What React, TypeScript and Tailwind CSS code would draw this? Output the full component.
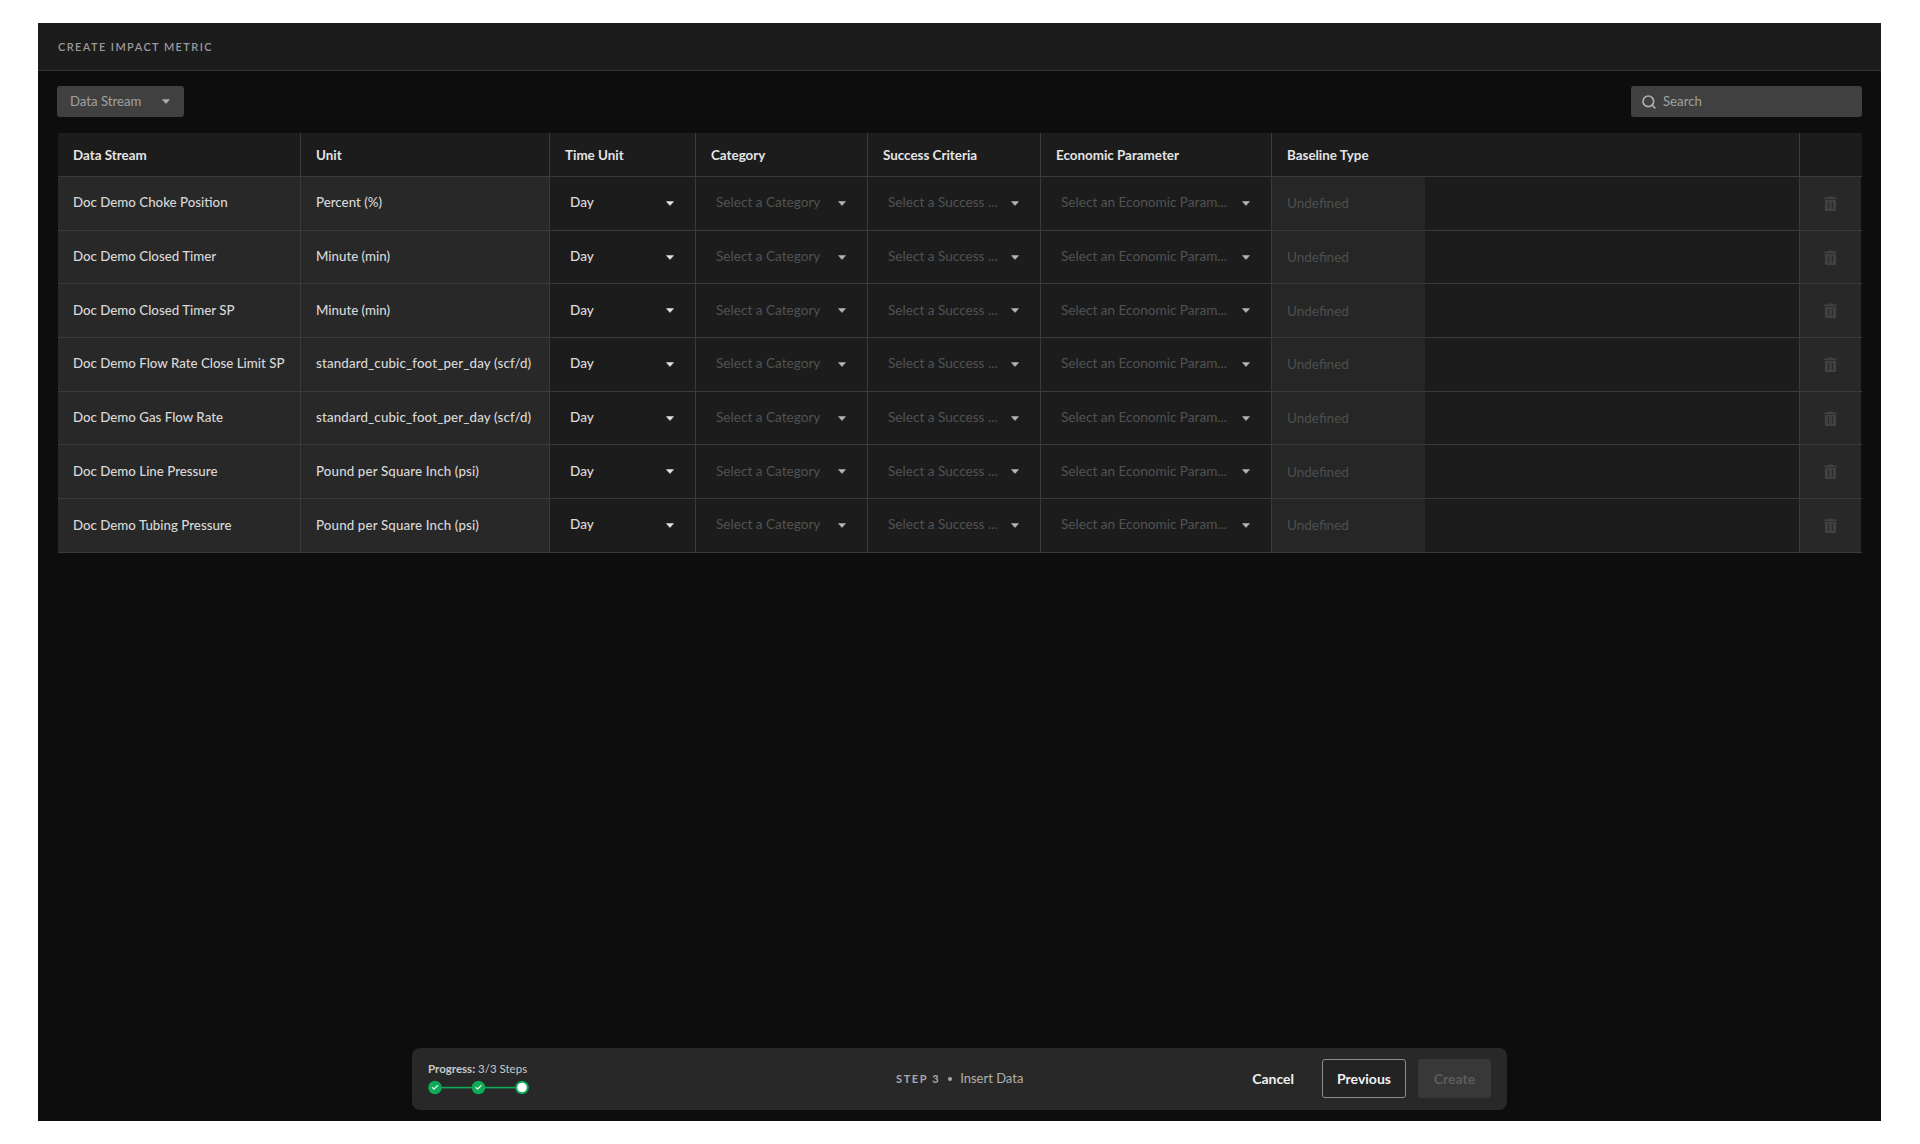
import React from "react";
import { Search } from "lucide-react";

const rows = [
  ["Doc Demo Choke Position", "Percent (%)"],
  ["Doc Demo Closed Timer", "Minute (min)"],
  ["Doc Demo Closed Timer SP", "Minute (min)"],
  ["Doc Demo Flow Rate Close Limit SP", "standard_cubic_foot_per_day (scf/d)"],
  ["Doc Demo Gas Flow Rate", "standard_cubic_foot_per_day (scf/d)"],
  ["Doc Demo Line Pressure", "Pound per Square Inch (psi)"],
  ["Doc Demo Tubing Pressure", "Pound per Square Inch (psi)"],
];

function Caret({ color = "#d0d0d0" }: { color?: string }) {
  return (
    <svg width="8" height="5" viewBox="0 0 8 5" className="shrink-0">
      <path d="M0.4 0.6 H7.6 L4 4.6 Z" fill={color} stroke={color} strokeWidth="0.5" strokeLinejoin="round" />
    </svg>
  );
}

function Trash() {
  return (
    <svg width="13" height="15" viewBox="0 0 12 14">
      <path d="M0 1.4H3.4L4 0.4H8L8.6 1.4H12V2.8H0Z M0.8 3.4H11.2V13a1 1 0 0 1-1 1H1.8a1 1 0 0 1-1-1Z" fill="#414141" />
      <rect x="3.6" y="5.4" width="1.2" height="6.6" fill="#292929" />
      <rect x="7.2" y="5.4" width="1.2" height="6.6" fill="#292929" />
    </svg>
  );
}

function Check({ cx }: { cx: number }) {
  return <path d={`M${cx - 3} 7.2 L${cx - 1} 9 L${cx + 3} 5.2`} fill="none" stroke="#d9efe0" strokeWidth="1.3" />;
}

function Head({ children, last }: { children?: React.ReactNode; last?: boolean }) {
  return (
    <div className={`flex items-center pl-[15px] pt-[1px] text-[13.4px] font-bold text-[#e4e4e4] ${last ? "" : "border-r-[1.5px] border-[#3a3a3a]"}`}>
      {children}
    </div>
  );
}

function Select({ text, dim }: { text: string; dim?: boolean }) {
  return (
    <div className="flex items-center justify-between border-r-[1.5px] border-[#3a3a3a] bg-[#1c1c1c] pl-5 pr-[21px]">
      <span className={`-mt-[2px] truncate text-[13.6px] ${dim ? "text-[#525252]" : "font-medium text-[#dcdcdc]"}`}>{text}</span>
      <Caret color={dim ? "#b8b8b8" : "#e6e6e6"} />
    </div>
  );
}

const gridCols = "grid grid-cols-[243px_249px_146px_172px_173px_231px_528px_61px]";

export default function App() {
  return (
    <div className="h-[1144px] w-[1920px] overflow-hidden bg-white pl-[38px] pt-[23px] font-['Lato',sans-serif]">
      <div className="flex h-[1098px] w-[1843px] flex-col bg-[#0d0d0d]">
        <div className="flex h-[48px] shrink-0 items-center border-b border-[#333333] bg-[#1c1c1c] pl-5 pt-[2px]">
          <span className="text-[11px] font-semibold tracking-[1.4px] text-[#9a9a9a]">CREATE IMPACT METRIC</span>
        </div>

        <div className="flex items-center justify-between pl-[19px] pr-[19px] pt-[15px]">
          <div className="flex h-[31px] w-[127px] items-center justify-between rounded-[3px] bg-[#404040] pl-[13px] pr-[14px]">
            <span className="text-[13.2px] text-[#a0a0a0]">Data Stream</span>
            <Caret color="#b0b0b0" />
          </div>
          <div className="flex h-[31px] w-[231px] items-center gap-[6px] rounded-[3px] bg-[#404040] pl-[10px]">
            <Search size={16} strokeWidth={2.4} color="#b0b0b0" />
            <span className="text-[13.2px] text-[#a0a0a0]">Search</span>
          </div>
        </div>

        <div className="ml-[20px] mt-[16px] w-[1804px]">
          <div className={`${gridCols} h-[44px] border-b-[1.5px] border-[#3a3a3a] bg-[#1c1c1c]`}>
            <Head>Data Stream</Head>
            <Head>Unit</Head>
            <Head>Time Unit</Head>
            <Head>Category</Head>
            <Head>Success Criteria</Head>
            <Head>Economic Parameter</Head>
            <Head>Baseline Type</Head>
            <Head last />
          </div>
          {rows.map(([name, unit]) => (
            <div key={name} className={`${gridCols} h-[53.7px] border-b-[1.5px] border-[#3a3a3a] text-[13.3px]`}>
              <div className="flex items-center border-r-[1.5px] border-[#3a3a3a] bg-[#282828] pl-[15px] font-medium text-[#d8d8d8]">{name}</div>
              <div className={`flex items-center border-r-[1.5px] border-[#3a3a3a] bg-[#282828] pl-[15px] font-medium text-[#d8d8d8] ${unit.length > 12 ? "tracking-[0.15px]" : ""}`}>{unit}</div>
              <Select text="Day" />
              <Select text="Select a Category" dim />
              <Select text="Select a Success ..." dim />
              <Select text="Select an Economic Param..." dim />
              <div className="flex border-r-[1.5px] border-[#3a3a3a] bg-[#1c1c1c]">
                <div className="flex w-[153px] items-center bg-[#262626] pl-[15px] text-[13.5px] text-[#4e4e4e]">Undefined</div>
              </div>
              <div className="flex items-center justify-center bg-[#282828] pr-[1px]">
                <Trash />
              </div>
            </div>
          ))}
        </div>

        <div className="mx-auto mb-[11px] mt-auto flex h-[62px] w-[1095px] items-center rounded-[8px] bg-[#282828] pl-4 pr-4">
          <div className="w-[468px]">
            <div className="text-[11.5px] leading-[14px] text-[#c8c8c8]">
              <span className="font-bold">Progress:</span> 3/3 Steps
            </div>
            <svg width="102" height="16" viewBox="0 0 102 16" className="mt-[4px] block">
              <rect x="6" y="6.8" width="90" height="1.6" fill="#0fa958" />
              <circle cx="7" cy="7.5" r="6.8" fill="#0fa958" />
              <Check cx={7} />
              <circle cx="50.5" cy="7.5" r="6.8" fill="#0fa958" />
              <Check cx={50.5} />
              <circle cx="94" cy="7.5" r="6.8" fill="#0fa958" />
              <circle cx="94" cy="7.5" r="4.8" fill="#ffffff" />
            </svg>
          </div>
          <div className="flex items-center gap-[8px]">
            <span className="text-[11px] font-bold tracking-[1.6px] text-[#a8a8a8]">STEP 3</span>
            <span className="h-[4px] w-[4px] rounded-full bg-[#a8a8a8]" />
            <span className="text-[13px] text-[#b0b0b0]">Insert Data</span>
          </div>
          <span className="-mt-[2px] ml-auto mr-[28px] text-[14px] font-bold text-[#f0f0f0]">Cancel</span>
          <div className="-mt-[2px] flex h-[39px] w-[84px] items-center justify-center rounded-[3px] border-[1.5px] border-[#8c8c8c] bg-[#232323] text-[14px] font-bold text-[#f0f0f0]">
            Previous
          </div>
          <div className="-mt-[2px] ml-[12px] flex h-[39px] w-[73px] items-center justify-center rounded-[3px] bg-[#383838] text-[14px] font-bold text-[#5c5c5c]">
            Create
          </div>
        </div>
      </div>
    </div>
  );
}
